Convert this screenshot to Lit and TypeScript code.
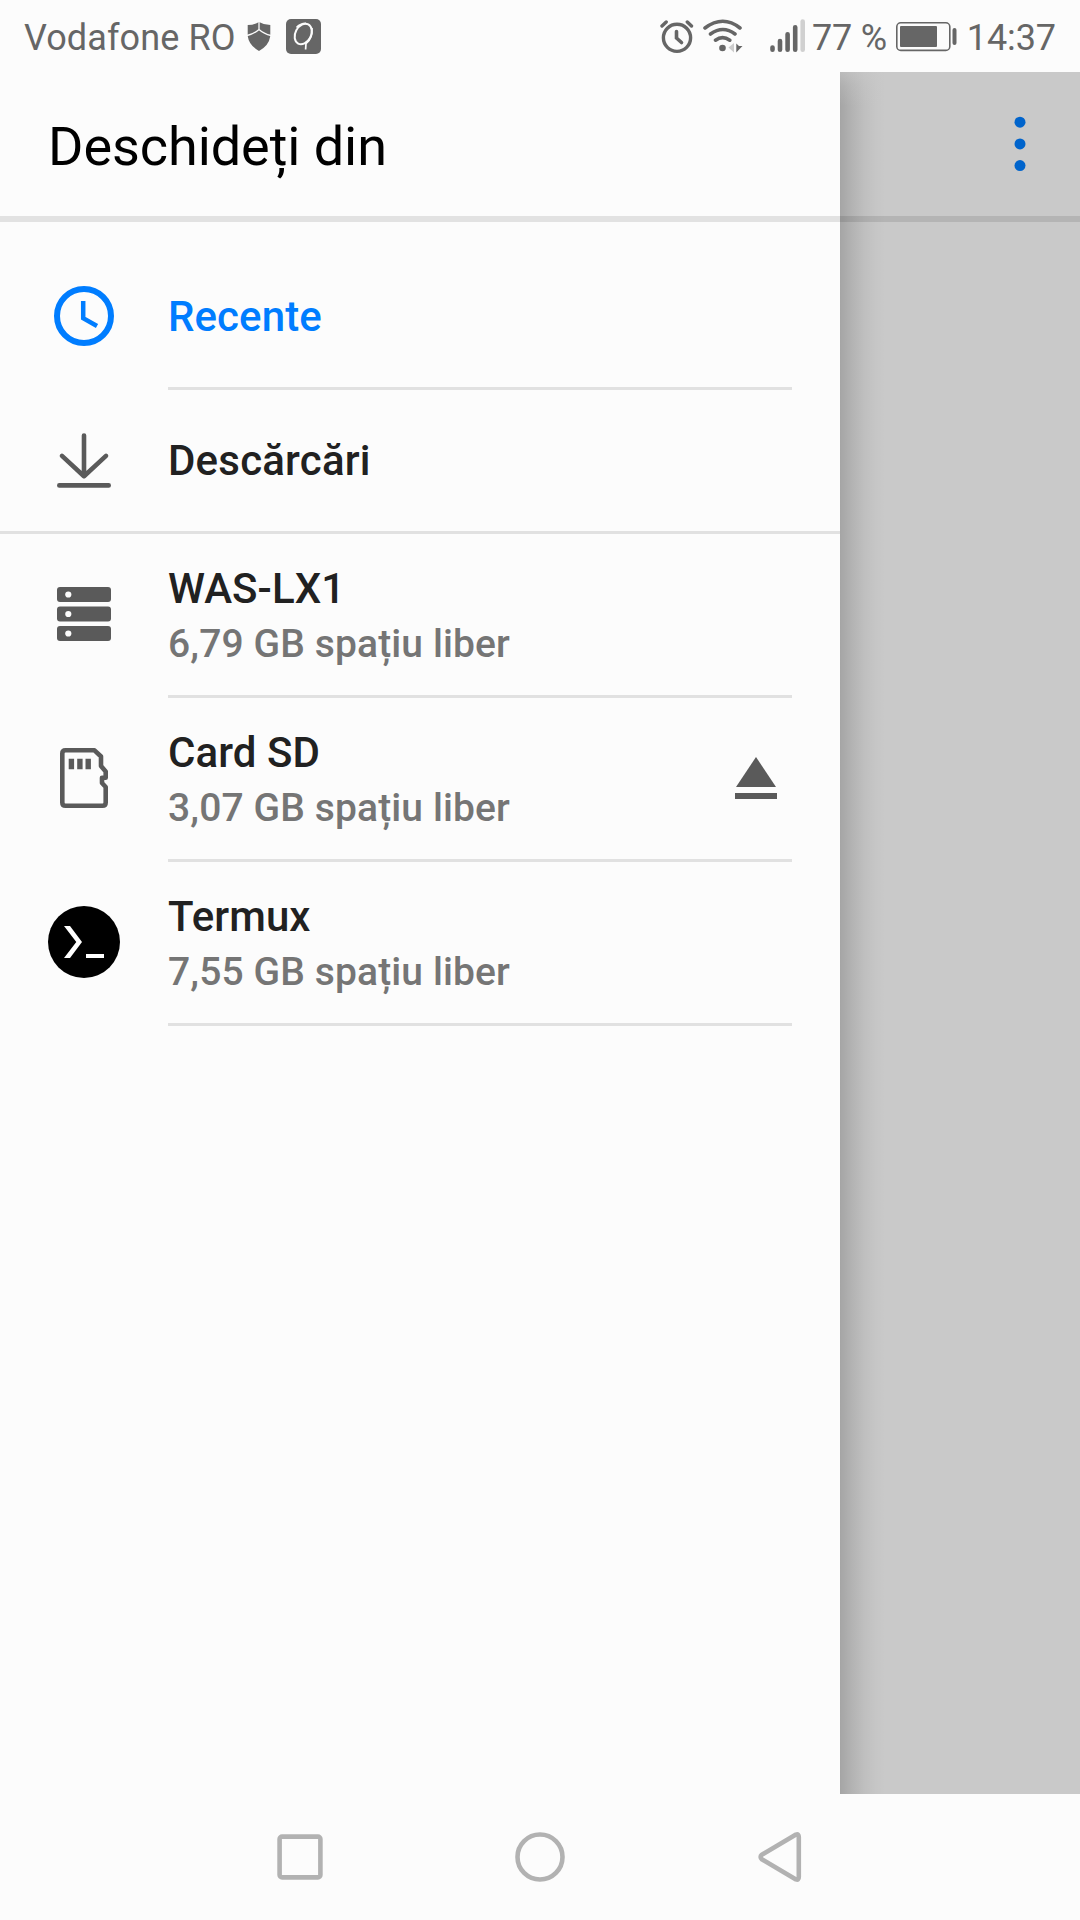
import { LitElement, html, css, svg } from "lit";
import { customElement, property } from "lit/decorators.js";

const icons: Record<string, unknown> = {
  clock: svg`<circle cx="36" cy="36" r="27" fill="none" stroke="#007dff" stroke-width="6"/>
    <path d="M35.2 21V38.2L49 46" fill="none" stroke="#007dff" stroke-width="4.5"/>`,
  download: svg`<g fill="none" stroke="#5a5a5a" stroke-width="4.6" stroke-linecap="round" stroke-linejoin="round">
    <path d="M36 11.6V52.2M14 31.9L36 52.2L58 31.9M11.3 61.4H60.7"/></g>`,
  storage: svg`<g fill="#5a5a5a"><rect x="9" y="9" width="54" height="15" rx="3"/>
    <rect x="9" y="28.5" width="54" height="15" rx="3"/><rect x="9" y="48" width="54" height="15" rx="3"/></g>
    <g fill="#fcfcfc"><circle cx="20.3" cy="16.5" r="3.1"/><circle cx="20.3" cy="36" r="3.1"/><circle cx="20.3" cy="55.5" r="3.1"/></g>`,
  sd: svg`<path d="M17.5 8.3H46.5L53 14.5V24L57.7 29.5V35.8H54V41L57.7 45V60.5Q57.7 63.7 54.5 63.7H17.5Q14.3 63.7 14.3 60.5V11.5Q14.3 8.3 17.5 8.3Z"
      fill="none" stroke="#5a5a5a" stroke-width="4.6" stroke-linejoin="round"/>
    <path d="M23.4 27.3V16.8M31.9 27.3V16.8M40.2 27.3V16.8" stroke="#5a5a5a" stroke-width="5.4"/>`,
  termux: svg`<circle cx="36" cy="36" r="36" fill="#000"/>
    <path d="M16 20H22L34 36L22 52H16L28.3 36Z" fill="#fff"/><rect x="38" y="48" width="18" height="4" fill="#fff"/>`,
};

@customElement("status-bar")
export class StatusBar extends LitElement {
  static styles = css`
    :host { display: flex; align-items: center; justify-content: space-between; height: 72px; padding: 0 24px;
      box-sizing: border-box; color: #666; font-size: 36px; line-height: 72px; background: #fcfcfc; }
    .side { display: flex; align-items: center; height: 72px; }
    .text { display: block; padding-top: 4px; white-space: pre; }
    .carrier { letter-spacing: 0.1px; }
    .level { letter-spacing: -0.2px; }
    .time { letter-spacing: -0.1px; }
    svg { display: block; flex: none; }
    .shield { margin-left: 11px; }
    .badge { margin-left: 15px; }
    .wifi { margin-left: 9px; }
    .signal { margin: 0 6px 0 27px; }
    .battery { margin: 0 9px 0 9px; }
  `;
  render() {
    return html`
      <div class="side">
        <span class="text carrier">Vodafone RO</span>
        <svg class="shield" width="24" height="72" viewBox="0 0 24 72">
          <path d="M12 22Q17 25 23.3 25V36Q22 45.5 12 51Q2 45.5 .7 36V25Q7 25 12 22Z" fill="#666"/>
          <path d="M12 21V29.5M0 35.5Q7 34 12 29.5Q17 34 24 35.5" fill="none" stroke="#fcfcfc" stroke-width="1.3"/>
        </svg>
        <svg class="badge" width="35" height="72" viewBox="0 0 35 72">
          <rect y="19" width="35" height="35" rx="5" fill="#666"/>
          <ellipse cx="17.2" cy="34" rx="7.8" ry="10.8" transform="rotate(28 17.2 34)" fill="none" stroke="#fcfcfc" stroke-width="2"/>
          <path d="M10.5 27.5Q14 23.6 20 23.4M26 28Q27 38 20 43.5L19.6 49.5" fill="none" stroke="#fcfcfc" stroke-width="1.7"/>
        </svg>
      </div>
      <div class="side">
        <svg width="34" height="72" viewBox="0 0 34 72" fill="none" stroke="#666" stroke-linecap="round">
          <circle cx="17" cy="37.8" r="13.6" stroke-width="3.4"/>
          <path d="M16.5 31.5V38L21.5 42.5" stroke-width="3.6"/>
          <path d="M2 26L6.2 22M31.5 26L27.3 22" stroke-width="3.4"/>
        </svg>
        <svg class="wifi" width="40" height="72" viewBox="0 0 40 72" fill="none" stroke="#666" stroke-width="3.6" stroke-linecap="round">
          <path d="M2 28Q20 14.5 37 28M7.5 34Q20 25 32 34M12.5 40.2Q19.5 35 26.8 40.2"/>
          <circle cx="19.5" cy="48" r="3.3" fill="#666" stroke="none"/>
          <path d="M31 43V52.5L25.5 47.5Z" fill="#ccc" stroke="none"/>
          <path d="M33.3 43.5V52.5L39.5 46H36Z" fill="#666" stroke="none"/>
        </svg>
        <svg class="signal" width="36" height="72" viewBox="0 0 36 72" fill="none" stroke="#666" stroke-width="4.6" stroke-linecap="round">
          <path d="M2.5 47.5V49.7M10 41V49.7M17.6 34.2V49.7M25.2 27.2V49.7"/>
          <path d="M32.7 21.5V49.7" stroke="#d0d0d0"/>
        </svg>
        <span class="text level">77 %</span>
        <svg class="battery" width="62" height="72" viewBox="0 0 62 72">
          <rect x=".8" y="22.8" width="53" height="27.6" rx="4" fill="none" stroke="#666" stroke-width="1.6"/>
          <rect x="4" y="26" width="37" height="21" rx="1" fill="#666"/>
          <rect x="56.5" y="28" width="4" height="17" rx="2" fill="#666"/>
        </svg>
        <span class="text time">14:37</span>
      </div>`;
  }
}

@customElement("root-item")
export class RootItem extends LitElement {
  @property() icon = "";
  @property() label = "";
  @property() detail = "";
  @property({ type: Boolean }) active = false;
  @property({ type: Boolean }) ejectable = false;
  @property({ type: Boolean }) last = false;

  static styles = css`
    :host { display: block; }
    .row { display: flex; height: 144px; padding-left: 48px; box-sizing: border-box; }
    .row.tall { height: 164px; }
    .row.last { border-bottom: 3px solid #e1e1e1; }
    .icon { width: 72px; margin-right: 48px; padding-bottom: 1px; display: flex; align-items: center; }
    .row:not(.last) .icon { padding-bottom: 4px; }
    .body { flex: 1; display: flex; align-items: center; justify-content: space-between;
      margin-right: 48px; border-bottom: 3px solid #e1e1e1; }
    .last .body { border-bottom: 0; }
    .label { font-size: 42px; line-height: 50px; font-weight: 500; color: #212121; white-space: nowrap; letter-spacing: 0.08px; }
    .last .label { letter-spacing: 0.2px; }
    .tall .label { padding-top: 1px; }
    .label.active { color: #007dff; }
    .detail { font-size: 39px; line-height: 46px; margin-top: 7px; font-weight: 500; color: #757575; white-space: nowrap; letter-spacing: 0.12px; }
    .eject { margin: 0 15px 2px 0; }
    svg { display: block; }
  `;
  render() {
    return html`<div class="row ${this.detail ? "tall" : ""} ${this.last ? "last" : ""}">
      <div class="icon"><svg width="72" height="72" viewBox="0 0 72 72">${icons[this.icon]}</svg></div>
      <div class="body">
        <div>
          <div class="label ${this.active ? "active" : ""}">${this.label}</div>
          ${this.detail ? html`<div class="detail">${this.detail}</div>` : ""}
        </div>
        ${this.ejectable
          ? html`<svg class="eject" width="42" height="42" viewBox="0 0 42 42" fill="#5a5a5a">
              <path d="M21 0L41 30H1Z"/><rect y="36" width="42" height="6"/></svg>`
          : ""}
      </div>
    </div>`;
  }
}

@customElement("app-root")
export class AppRoot extends LitElement {
  static styles = css`
    :host { display: flex; flex-direction: column; width: 1080px; height: 1920px; background: #fcfcfc;
      font-family: Roboto, "Liberation Sans", sans-serif; overflow: hidden; }
    .main { flex: 1; display: flex; overflow: hidden; }
    .drawer { width: 840px; background: #fcfcfc; }
    .title { margin: 0; height: 150px; box-sizing: border-box; padding: 3px 48px 0; line-height: 144px;
      border-bottom: 6px solid #e2e2e2; font-size: 54px; font-weight: 400; letter-spacing: -0.06px; color: #000; }
    .list { padding-top: 24px; }
    .scrim { flex: 1; background:
      linear-gradient(to bottom, rgba(201,201,201,.6), rgba(201,201,201,.25) 14px, rgba(201,201,201,0) 34px),
      linear-gradient(to right, rgba(0,0,0,.18), rgba(0,0,0,.11) 12px, rgba(0,0,0,.05) 24px, rgba(0,0,0,.015) 36px, transparent 46px),
      #c9c9c9; }
    .toolbar { height: 150px; box-sizing: border-box; border-bottom: 6px solid rgba(0,0,0,.1);
      display: flex; justify-content: flex-end; padding-right: 54px; }
    .nav { height: 126px; display: flex; justify-content: center; gap: 180px; align-items: center; }
    svg { display: block; }
  `;
  render() {
    return html`
      <status-bar></status-bar>
      <div class="main">
        <div class="drawer">
          <h1 class="title">Deschideți din</h1>
          <div class="list">
            <root-item icon="clock" label="Recente" active></root-item>
            <root-item icon="download" label="Descărcări" last></root-item>
            <root-item icon="storage" label="WAS-LX1" detail="6,79 GB spațiu liber"></root-item>
            <root-item icon="sd" label="Card SD" detail="3,07 GB spațiu liber" ejectable></root-item>
            <root-item icon="termux" label="Termux" detail="7,55 GB spațiu liber"></root-item>
          </div>
        </div>
        <div class="scrim">
          <div class="toolbar">
            <svg width="12" height="144" viewBox="0 0 12 144" fill="#0064cc">
              <circle cx="6" cy="50.2" r="5.5"/><circle cx="6" cy="71.9" r="5.5"/><circle cx="6" cy="93.6" r="5.5"/>
            </svg>
          </div>
        </div>
      </div>
      <div class="nav">
        <svg width="60" height="60" viewBox="0 0 60 60" fill="none" stroke="#b2b2b2" stroke-width="4.6"><rect x="9.6" y="9.6" width="40.8" height="40.8" rx="2.5"/></svg>
        <svg width="60" height="60" viewBox="0 0 60 60" fill="none" stroke="#b2b2b2" stroke-width="4.6"><circle cx="30" cy="30" r="22.5"/></svg>
        <svg width="60" height="60" viewBox="0 0 60 60" fill="none" stroke="#b2b2b2" stroke-width="4.6" stroke-linejoin="round">
          <path d="M11.8 27.8L46 7.6Q48.8 6.5 48.8 10V50Q48.8 53.5 46 52.4L11.8 32.2Q9.4 30 11.8 27.8Z"/></svg>
      </div>`;
  }
}
